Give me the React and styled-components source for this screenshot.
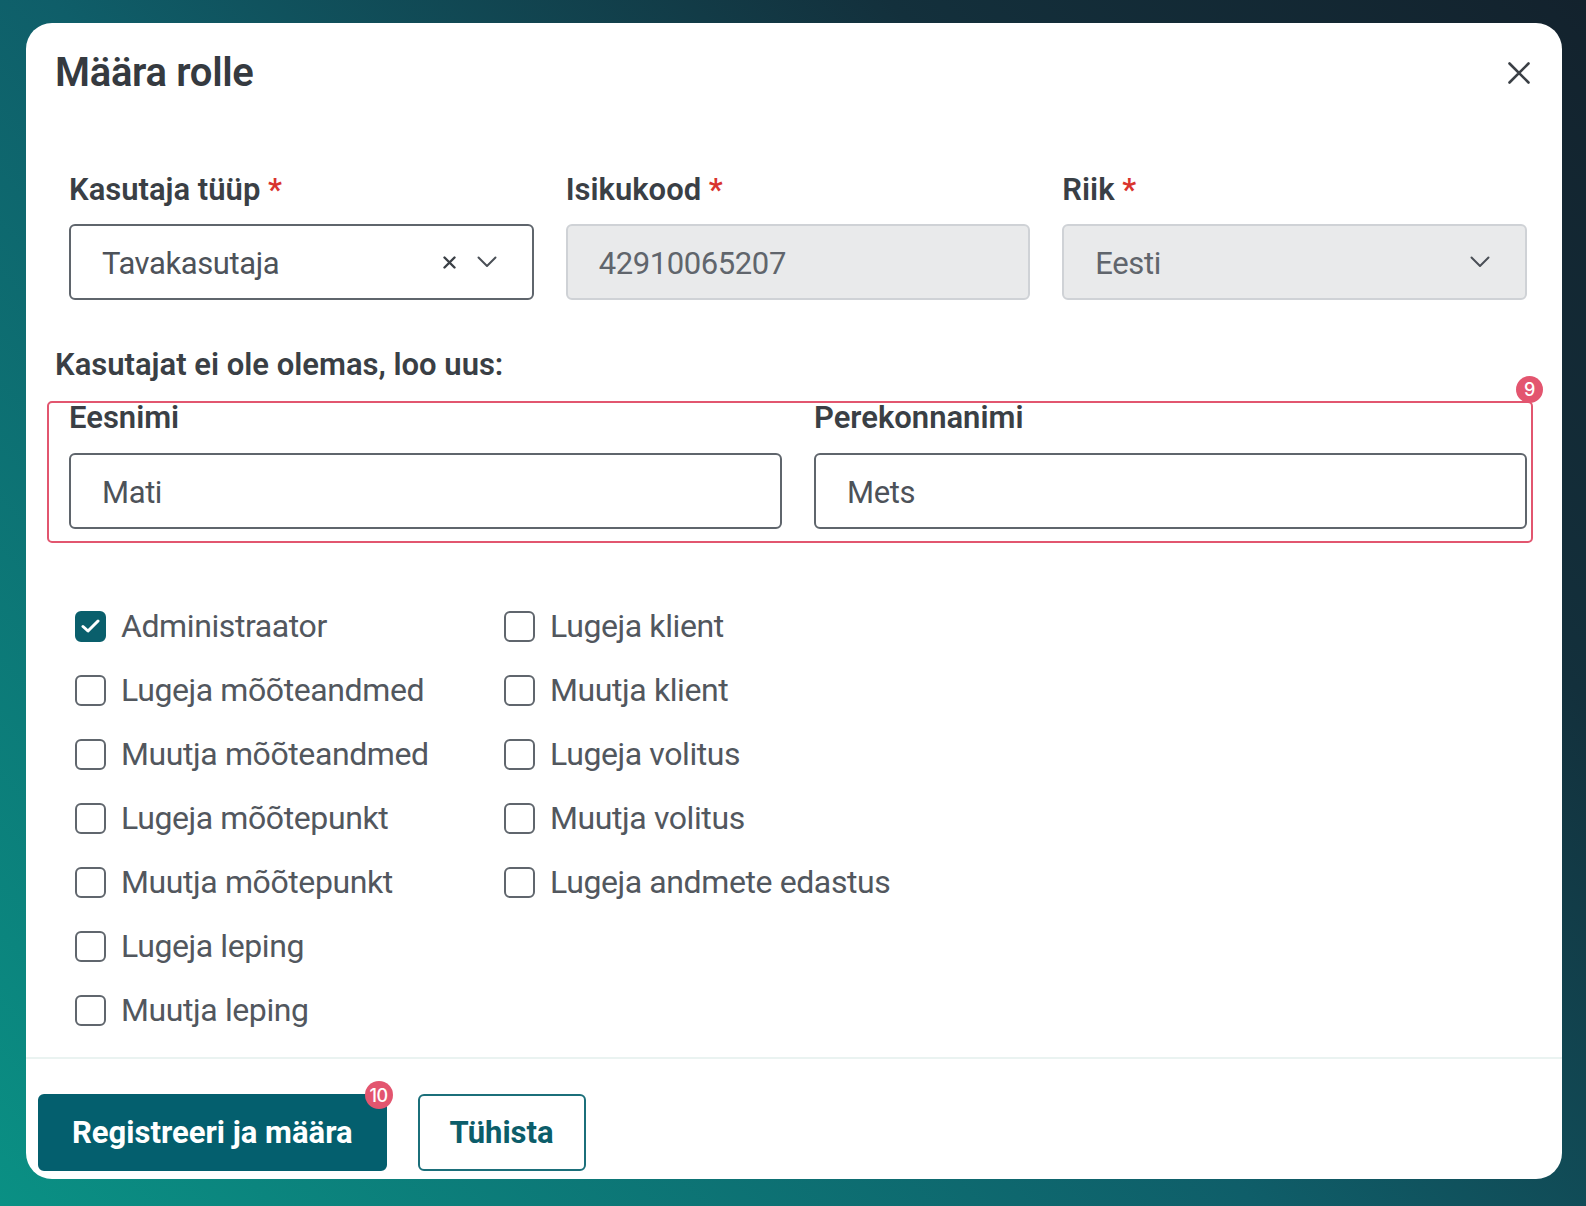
import React from "react";
import styled, { createGlobalStyle } from "styled-components";

const leftRoles = [
  { label: "Administraator", checked: true },
  { label: "Lugeja mõõteandmed" },
  { label: "Muutja mõõteandmed" },
  { label: "Lugeja mõõtepunkt" },
  { label: "Muutja mõõtepunkt" },
  { label: "Lugeja leping" },
  { label: "Muutja leping" },
];

const rightRoles = [
  { label: "Lugeja klient" },
  { label: "Muutja klient" },
  { label: "Lugeja volitus" },
  { label: "Muutja volitus" },
  { label: "Lugeja andmete edastus" },
];

const App = () => {
  return (
    <>
      <GlobalStyle />
      <StyledPage>
        <StyledCard>
          <StyledHeader>
            <StyledTitle>Määra rolle</StyledTitle>
            <StyledCloseButton aria-label="Sulge">
              <svg width="22" height="22" viewBox="0 0 22 22">
                <path
                  d="M1.5 1.5 L20.5 20.5 M20.5 1.5 L1.5 20.5"
                  stroke="#3b4046"
                  strokeWidth="2.6"
                  strokeLinecap="round"
                  fill="none"
                />
              </svg>
            </StyledCloseButton>
          </StyledHeader>

          <StyledBody>
            <StyledFieldGrid>
              <Field label="Kasutaja tüüp" required>
                <StyledFieldBox>
                  <StyledValue>Tavakasutaja</StyledValue>
                  <ClearIcon />
                  <ChevronIcon />
                </StyledFieldBox>
              </Field>
              <Field label="Isikukood" required>
                <StyledFieldBox $disabled>
                  <StyledValue>42910065207</StyledValue>
                </StyledFieldBox>
              </Field>
              <Field label="Riik" required>
                <StyledFieldBox $disabled>
                  <StyledValue>Eesti</StyledValue>
                  <ChevronIcon />
                </StyledFieldBox>
              </Field>
            </StyledFieldGrid>

            <StyledSectionTitle>Kasutajat ei ole olemas, loo uus:</StyledSectionTitle>

            <StyledNameGroup>
              <Field label="Eesnimi" gap={17}>
                <StyledFieldBox>
                  <StyledValue>Mati</StyledValue>
                </StyledFieldBox>
              </Field>
              <Field label="Perekonnanimi" gap={17}>
                <StyledFieldBox>
                  <StyledValue>Mets</StyledValue>
                </StyledFieldBox>
              </Field>
              <StyledBadge $size={27} $top={-24} $right={-16}>
                9
              </StyledBadge>
            </StyledNameGroup>

            <StyledCheckGrid>
              {[...leftRoles, ...rightRoles].map((role) => (
                <StyledCheckItem key={role.label}>
                  <StyledCheckBox $checked={role.checked}>
                    {role.checked && (
                      <svg width="19" height="14" viewBox="0 0 19 14">
                        <path
                          d="M2 7.5 L7 12 L17 2"
                          stroke="#fff"
                          strokeWidth="3"
                          strokeLinecap="round"
                          strokeLinejoin="round"
                          fill="none"
                        />
                      </svg>
                    )}
                  </StyledCheckBox>
                  {role.label}
                </StyledCheckItem>
              ))}
            </StyledCheckGrid>
          </StyledBody>

          <StyledFooter>
            <StyledButton $primary>
              Registreeri ja määra
              <StyledBadge $size={28} $top={-15} $right={-8}>
                10
              </StyledBadge>
            </StyledButton>
            <StyledButton>Tühista</StyledButton>
          </StyledFooter>
        </StyledCard>
      </StyledPage>
    </>
  );
};

export default App;

var Field = ({ label, required, gap = 16, children }) => {
  return (
    <StyledField $gap={gap}>
      <StyledLabel>
        {label}
        {required && <span className="required"> *</span>}
      </StyledLabel>
      {children}
    </StyledField>
  );
};

var ChevronIcon = () => (
  <svg width="20" height="12" viewBox="0 0 20 12">
    <path
      d="M1.5 1.5 L10 10 L18.5 1.5"
      stroke="#4a4f56"
      strokeWidth="2"
      strokeLinecap="round"
      strokeLinejoin="round"
      fill="none"
    />
  </svg>
);

var ClearIcon = () => (
  <svg width="13" height="13" viewBox="0 0 13 13">
    <path
      d="M1.5 1.5 L11.5 11.5 M11.5 1.5 L1.5 11.5"
      stroke="#3b4046"
      strokeWidth="2.4"
      strokeLinecap="round"
      fill="none"
    />
  </svg>
);

const GlobalStyle = createGlobalStyle`
  html, body {
    margin: 0;
    padding: 0;
    min-height: 100%;
  }
  html {
    height: 100%;
  }
  body {
    background: linear-gradient(45deg, #0a9084 0%, #0f5e69 45%, #13303c 75%, #13222d 100%);
    font-family: Roboto, "Noto Sans", sans-serif;
  }
  * {
    box-sizing: border-box;
  }
`;

const StyledPage = styled.div`
  padding: 23px 24px 27px 26px;
`;

const StyledCard = styled.div`
  width: 1536px;
  background: #fff;
  border-radius: 26px;
  display: flex;
  flex-direction: column;
`;

const StyledHeader = styled.div`
  display: flex;
  align-items: center;
  justify-content: space-between;
  padding: 27px 32px 0 29px;
  height: 73px;
`;

const StyledTitle = styled.h2`
  margin: 0;
  font-size: 40px;
  line-height: 46px;
  font-weight: 600;
  letter-spacing: -0.3px;
  color: #353a40;
`;

const StyledCloseButton = styled.button`
  width: 22px;
  height: 22px;
  padding: 0;
  border: none;
  background: transparent;
  display: flex;
  cursor: pointer;
`;

const StyledBody = styled.div`
  padding: 0 35px 27px 29px;
`;

const StyledFieldGrid = styled.div`
  display: grid;
  grid-template-columns: repeat(3, 1fr);
  column-gap: 32px;
  margin: 76px 0 0 14px;
`;

const StyledField = styled.div`
  display: flex;
  flex-direction: column;
  gap: ${(p) => p.$gap}px;
`;

const StyledLabel = styled.label`
  font-size: 31px;
  line-height: 36px;
  font-weight: 600;
  color: #3a3f45;

  .required {
    color: #d9342e;
  }
`;

const StyledFieldBox = styled.div`
  height: 76px;
  display: flex;
  align-items: center;
  gap: 21px;
  padding: 0 35px 0 31px;
  border: 2px solid ${(p) => (p.$disabled ? "#cfd2d6" : "#5f656c")};
  background: ${(p) => (p.$disabled ? "#e9eaeb" : "#fff")};
  border-radius: 6px;
  font-size: 31px;
  letter-spacing: -0.4px;
  color: ${(p) => (p.$disabled ? "#60656c" : "#4d5259")};
`;

const StyledValue = styled.span`
  flex: 1;
  padding-top: 3px;
`;

const StyledSectionTitle = styled.p`
  margin: 47px 0 0;
  font-size: 31px;
  line-height: 36px;
  font-weight: 600;
  color: #3a3f45;
`;

const StyledNameGroup = styled.div`
  position: relative;
  display: grid;
  grid-template-columns: 1fr 1fr;
  column-gap: 32px;
  margin: 17px 0 0 14px;

  &::after {
    content: "";
    position: absolute;
    top: 1px;
    left: -22px;
    right: -6px;
    bottom: -14px;
    border: 2px solid #e2566f;
    border-radius: 5px;
    pointer-events: none;
  }
`;

const StyledBadge = styled.span`
  position: absolute;
  top: ${(p) => p.$top}px;
  right: ${(p) => p.$right}px;
  width: ${(p) => p.$size}px;
  height: ${(p) => p.$size}px;
  border-radius: 50%;
  background: #e3556f;
  color: #fff;
  font-family: Inter, "Noto Sans", sans-serif;
  font-size: 18px;
  font-weight: 500;
  letter-spacing: -0.5px;
  display: flex;
  align-items: center;
  justify-content: center;
  z-index: 1;
`;

const StyledCheckGrid = styled.div`
  display: grid;
  grid-template-columns: 429px auto;
  grid-template-rows: repeat(7, 40px);
  grid-auto-flow: column;
  row-gap: 24px;
  margin: 77px 0 0 20px;
`;

const StyledCheckItem = styled.label`
  display: flex;
  align-items: center;
  gap: 15px;
  font-size: 32px;
  letter-spacing: -0.4px;
  color: #52575e;
`;

const StyledCheckBox = styled.span`
  width: 31px;
  height: 31px;
  flex-shrink: 0;
  border-radius: 6px;
  border: 2px solid ${(p) => (p.$checked ? "#0a5f6c" : "#60666d")};
  background: ${(p) => (p.$checked ? "#0a5f6c" : "#fff")};
  display: flex;
  align-items: center;
  justify-content: center;
`;

const StyledFooter = styled.div`
  display: flex;
  gap: 31px;
  padding: 35px 12px 8px;
  border-top: 2px solid #eaf3f1;
`;

const StyledButton = styled.button`
  position: relative;
  height: 77px;
  padding: 0 ${(p) => (p.$primary ? 32 : 30)}px;
  border-radius: 6px;
  border: 2px solid ${(p) => (p.$primary ? "#045f6e" : "#1b6f7a")};
  background: ${(p) => (p.$primary ? "#045f6e" : "#fff")};
  color: ${(p) => (p.$primary ? "#fff" : "#0c5d6a")};
  font-family: Roboto, "Noto Sans", sans-serif;
  font-size: 31px;
  font-weight: 700;
  cursor: pointer;
`;
